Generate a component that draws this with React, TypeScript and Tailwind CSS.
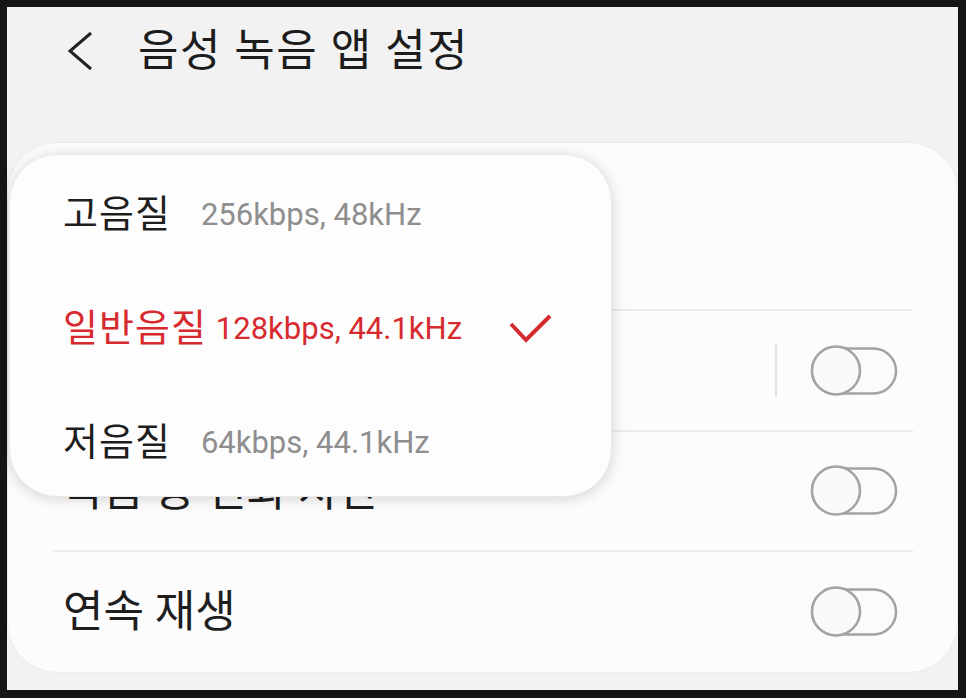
const KR = "font-['Roboto','Noto_Sans_CJK_KR',sans-serif]";

function Toggle() {
  return (
    <svg width="88" height="52" viewBox="0 0 88 52" className="shrink-0">
      <rect x="2" y="3.5" width="84" height="45" rx="22.5" fill="#fbfbfb" stroke="#a3a3a3" strokeWidth="2.5" />
      <circle cx="26" cy="25.5" r="24" fill="#f9f9f9" stroke="#a3a3a3" strokeWidth="2.5" />
    </svg>
  );
}

function Divider() {
  return <div className="ml-[45px] mr-[44px] h-[2px] bg-[#ebebeb]" />;
}

const options = [
  { label: '고음질', detail: '256kbps, 48kHz', gap: 'ml-[30px]', selected: false },
  { label: '일반음질', detail: '128kbps, 44.1kHz', gap: 'ml-[9px]', selected: true },
  { label: '저음질', detail: '64kbps, 44.1kHz', gap: 'ml-[30px]', selected: false },
];

function QualityPopup() {
  return (
    <div className="absolute left-[2px] top-[147px] w-[603px] h-[343px] rounded-[48px] bg-[#fdfdfd] pt-[2px] shadow-[0_2px_14px_rgba(0,0,0,0.16)] border border-[#e9e9e9]">
      {options.map((o) => (
        <div key={o.label} className="flex items-center h-[114px] pl-[53px] pr-[56px]">
          <span
            className={`text-[38px] tracking-[1px] leading-none ${o.selected ? 'text-[#d62a2f]' : 'text-[#1e1e1e]'}`}
          >
            {o.label}
          </span>
          <span
            className={`${o.gap} text-[31px] leading-none ${o.selected ? 'text-[#d62a2f]' : 'text-[#8e8e8e]'}`}
          >
            {o.detail}
          </span>
          {o.selected && (
            <svg width="48" height="36" viewBox="0 0 48 36" className="ml-auto">
              <polyline points="4,14 19,30 43,6" fill="none" stroke="#d62a2f" strokeWidth="4" />
            </svg>
          )}
        </div>
      ))}
    </div>
  );
}

export default function App() {
  return (
    <div className={`w-[966px] h-[698px] bg-[#151515] pt-[7px] pl-[7px] pr-[8px] pb-[8px] ${KR}`}>
      <div className="relative h-full bg-[#f2f2f2] overflow-hidden">
        <header className="flex items-center h-[88px] pl-[59px]">
          <svg width="28" height="42" viewBox="0 0 28 42">
            <polyline points="25,3 4,21 25,39" fill="none" stroke="#222" strokeWidth="3" />
          </svg>
          <h1 className="ml-[44px] text-[44px] tracking-[1.5px] leading-none text-[#1c1c1c]">음성 녹음 앱 설정</h1>
        </header>

        <div className="mt-[47px] h-[531px] rounded-[50px] bg-[#fcfcfc] border border-[#ececec] flex flex-col">
          <div className="h-[166px] flex flex-col justify-center pl-[55px] pr-[59px]">
            <span className="text-[44px] leading-tight text-[#1e1e1e]">녹음 품질</span>
            <span className="text-[31px] leading-tight text-[#d62a2f]">일반음질</span>
          </div>
          <Divider />
          <div className="h-[120px] flex items-center pl-[55px] pr-[59px]">
            <span className="text-[44px] text-[#1e1e1e]">음성을 텍스트로 변환</span>
            <div className="ml-auto w-[2px] h-[53px] bg-[#e4e4e4]" />
            <div className="ml-[33px]">
              <Toggle />
            </div>
          </div>
          <Divider />
          <div className="h-[118px] flex items-center pl-[55px] pr-[59px]">
            <span className="text-[44px] text-[#1e1e1e]">녹음 중 전화 차단</span>
            <div className="ml-auto">
              <Toggle />
            </div>
          </div>
          <Divider />
          <div className="h-[120px] flex items-center pl-[55px] pr-[59px]">
            <span className="text-[44px] text-[#1e1e1e]">연속 재생</span>
            <div className="ml-auto">
              <Toggle />
            </div>
          </div>
        </div>

        <QualityPopup />
      </div>
    </div>
  );
}
